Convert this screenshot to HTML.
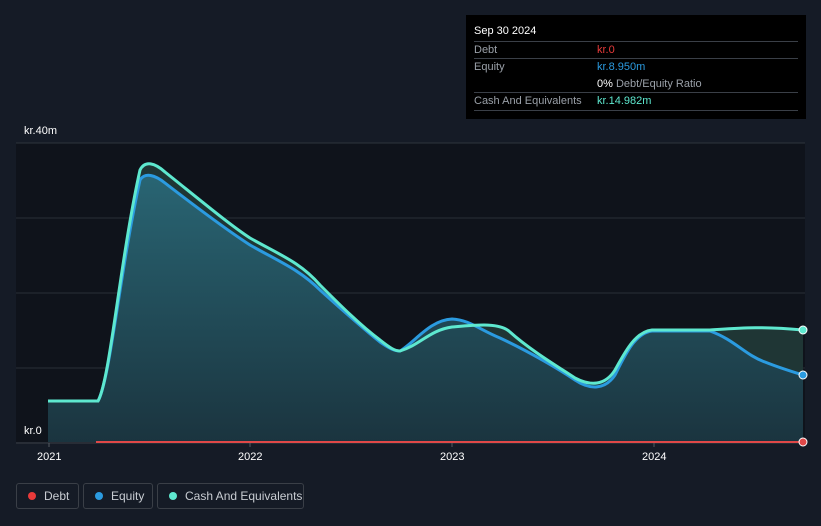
<!DOCTYPE html>
<html><head><meta charset="utf-8"><style>
body{margin:0;background:#151b26;width:821px;height:526px;overflow:hidden;font-family:"Liberation Sans",sans-serif;position:relative}
.tt{position:absolute;left:466px;top:15px;width:340px;height:104px;background:#000;color:#fff;font-size:11px}
.tt .h{position:absolute;left:8px;top:10px;font-size:11px}
.row{position:absolute;left:8px;width:324px;border-top:1px solid #3a3f47;height:17px}
.row span{position:absolute;top:2px}
.l{left:0;color:#9aa0a8}.v{left:123px}
.lg{position:absolute;top:483px;height:26px;border:1px solid #3a3f47;border-radius:3px;color:#c8ccd2;font-size:12px;box-sizing:border-box}
.lg i{position:absolute;left:11px;top:8px;width:8px;height:8px;border-radius:50%}
.lg span{position:absolute;left:27px;top:5px}
.ax{position:absolute;color:#fff;font-size:11px}
</style></head><body>
<svg width="821" height="526" style="position:absolute;left:0;top:0">
<defs><linearGradient id="g" x1="0" y1="0" x2="0" y2="1"><stop offset="0" stop-color="#2a6a7a"/><stop offset="1" stop-color="#1a3440"/></linearGradient></defs>
<rect x="16" y="143" width="789" height="299" fill="#0f131b"/>
<line x1="16" y1="143" x2="805" y2="143" stroke="#2e343c"/>
<line x1="16" y1="218" x2="805" y2="218" stroke="#2a2f37"/>
<line x1="16" y1="293" x2="805" y2="293" stroke="#2a2f37"/>
<line x1="16" y1="368" x2="805" y2="368" stroke="#2a2f37"/>
<path d="M48,401 L98,401 C110,380 120,260 140,170 C145,160 155,163 165,172 C200,200 230,225 250,238 C280,255 300,262 320,285 C340,305 360,325 380,340 C390,348 395,351 400,351 C420,345 430,330 452,327 C475,325 500,322 510,332 C530,350 560,368 575,378 C590,386 605,386 615,370 C625,352 635,332 652,330 L710,330 C740,328 760,326 803,330 L803,442 L48,442 Z" fill="#1f3635"/>
<path d="M48,401 L98,401 C110,380 120,270 140,180 C145,172 155,175 165,183 C200,210 230,232 250,245 C280,262 300,270 320,290 C340,308 360,326 380,342 C390,349 395,351 400,351 C415,342 430,320 452,319 C470,320 480,330 500,338 C530,352 560,370 575,380 C590,390 605,390 615,375 C625,355 635,333 652,331 L710,331 C735,340 745,355 765,362 C780,368 790,371 803,375 L803,442 L48,442 Z" fill="url(#g)" opacity="0.9"/>
<path d="M48,401 L98,401 C110,380 120,270 140,180 C145,172 155,175 165,183 C200,210 230,232 250,245 C280,262 300,270 320,290 C340,308 360,326 380,342 C390,349 395,351 400,351 C415,342 430,320 452,319 C470,320 480,330 500,338 C530,352 560,370 575,380 C590,390 605,390 615,375 C625,355 635,333 652,331 L710,331 C735,340 745,355 765,362 C780,368 790,371 803,375" fill="none" stroke="#2b9be0" stroke-width="3"/>
<path d="M48,401 L98,401 C110,380 120,260 140,170 C145,160 155,163 165,172 C200,200 230,225 250,238 C280,255 300,262 320,285 C340,305 360,325 380,340 C390,348 395,351 400,351 C420,345 430,330 452,327 C475,325 500,322 510,332 C530,350 560,368 575,378 C590,386 605,386 615,370 C625,352 635,332 652,330 L710,330 C740,328 760,326 803,330" fill="none" stroke="#5ee8cf" stroke-width="3"/>
<line x1="16" y1="443" x2="805" y2="443" stroke="#3a3f47"/>
<line x1="96" y1="442" x2="803" y2="442" stroke="#e04848" stroke-width="2"/>
<circle cx="803" cy="330" r="4" fill="#5ee8cf" stroke="#fff" stroke-width="1"/>
<circle cx="803" cy="375" r="4" fill="#2b9be0" stroke="#fff" stroke-width="1"/>
<circle cx="803" cy="442" r="4" fill="#e04848" stroke="#fff" stroke-width="1"/>
<g stroke="#555b63"><line x1="49" y1="443" x2="49" y2="447"/><line x1="250" y1="443" x2="250" y2="447"/><line x1="452" y1="443" x2="452" y2="447"/><line x1="654" y1="443" x2="654" y2="447"/></g>
</svg>
<div class="ax" style="left:24px;top:125px">kr.40m</div>
<div class="ax" style="left:24px;top:425px">kr.0</div>
<div class="ax" style="left:37px;top:451px">2021</div>
<div class="ax" style="left:238px;top:451px">2022</div>
<div class="ax" style="left:440px;top:451px">2023</div>
<div class="ax" style="left:642px;top:451px">2024</div>
<div class="tt">
<div class="h">Sep 30 2024</div>
<div class="row" style="top:26px"><span class="l">Debt</span><span class="v" style="color:#e83a3a">kr.0</span></div>
<div class="row" style="top:43px;border-bottom:none;height:34px"><span class="l">Equity</span><span class="v" style="color:#2b9be0">kr.8.950m</span><span class="v" style="top:19px;color:#9aa0a8"><b style="color:#fff;font-weight:normal">0%</b> Debt/Equity Ratio</span></div>
<div class="row" style="top:77px;border-bottom:1px solid #3a3f47"><span class="l">Cash And Equivalents</span><span class="v" style="color:#5ee8cf">kr.14.982m</span></div>
</div>
<div class="lg" style="left:16px;width:63px"><i style="background:#e83a3a"></i><span>Debt</span></div>
<div class="lg" style="left:83px;width:70px"><i style="background:#2b9be0"></i><span>Equity</span></div>
<div class="lg" style="left:157px;width:147px"><i style="background:#5ee8cf"></i><span>Cash And Equivalents</span></div>
</body></html>
